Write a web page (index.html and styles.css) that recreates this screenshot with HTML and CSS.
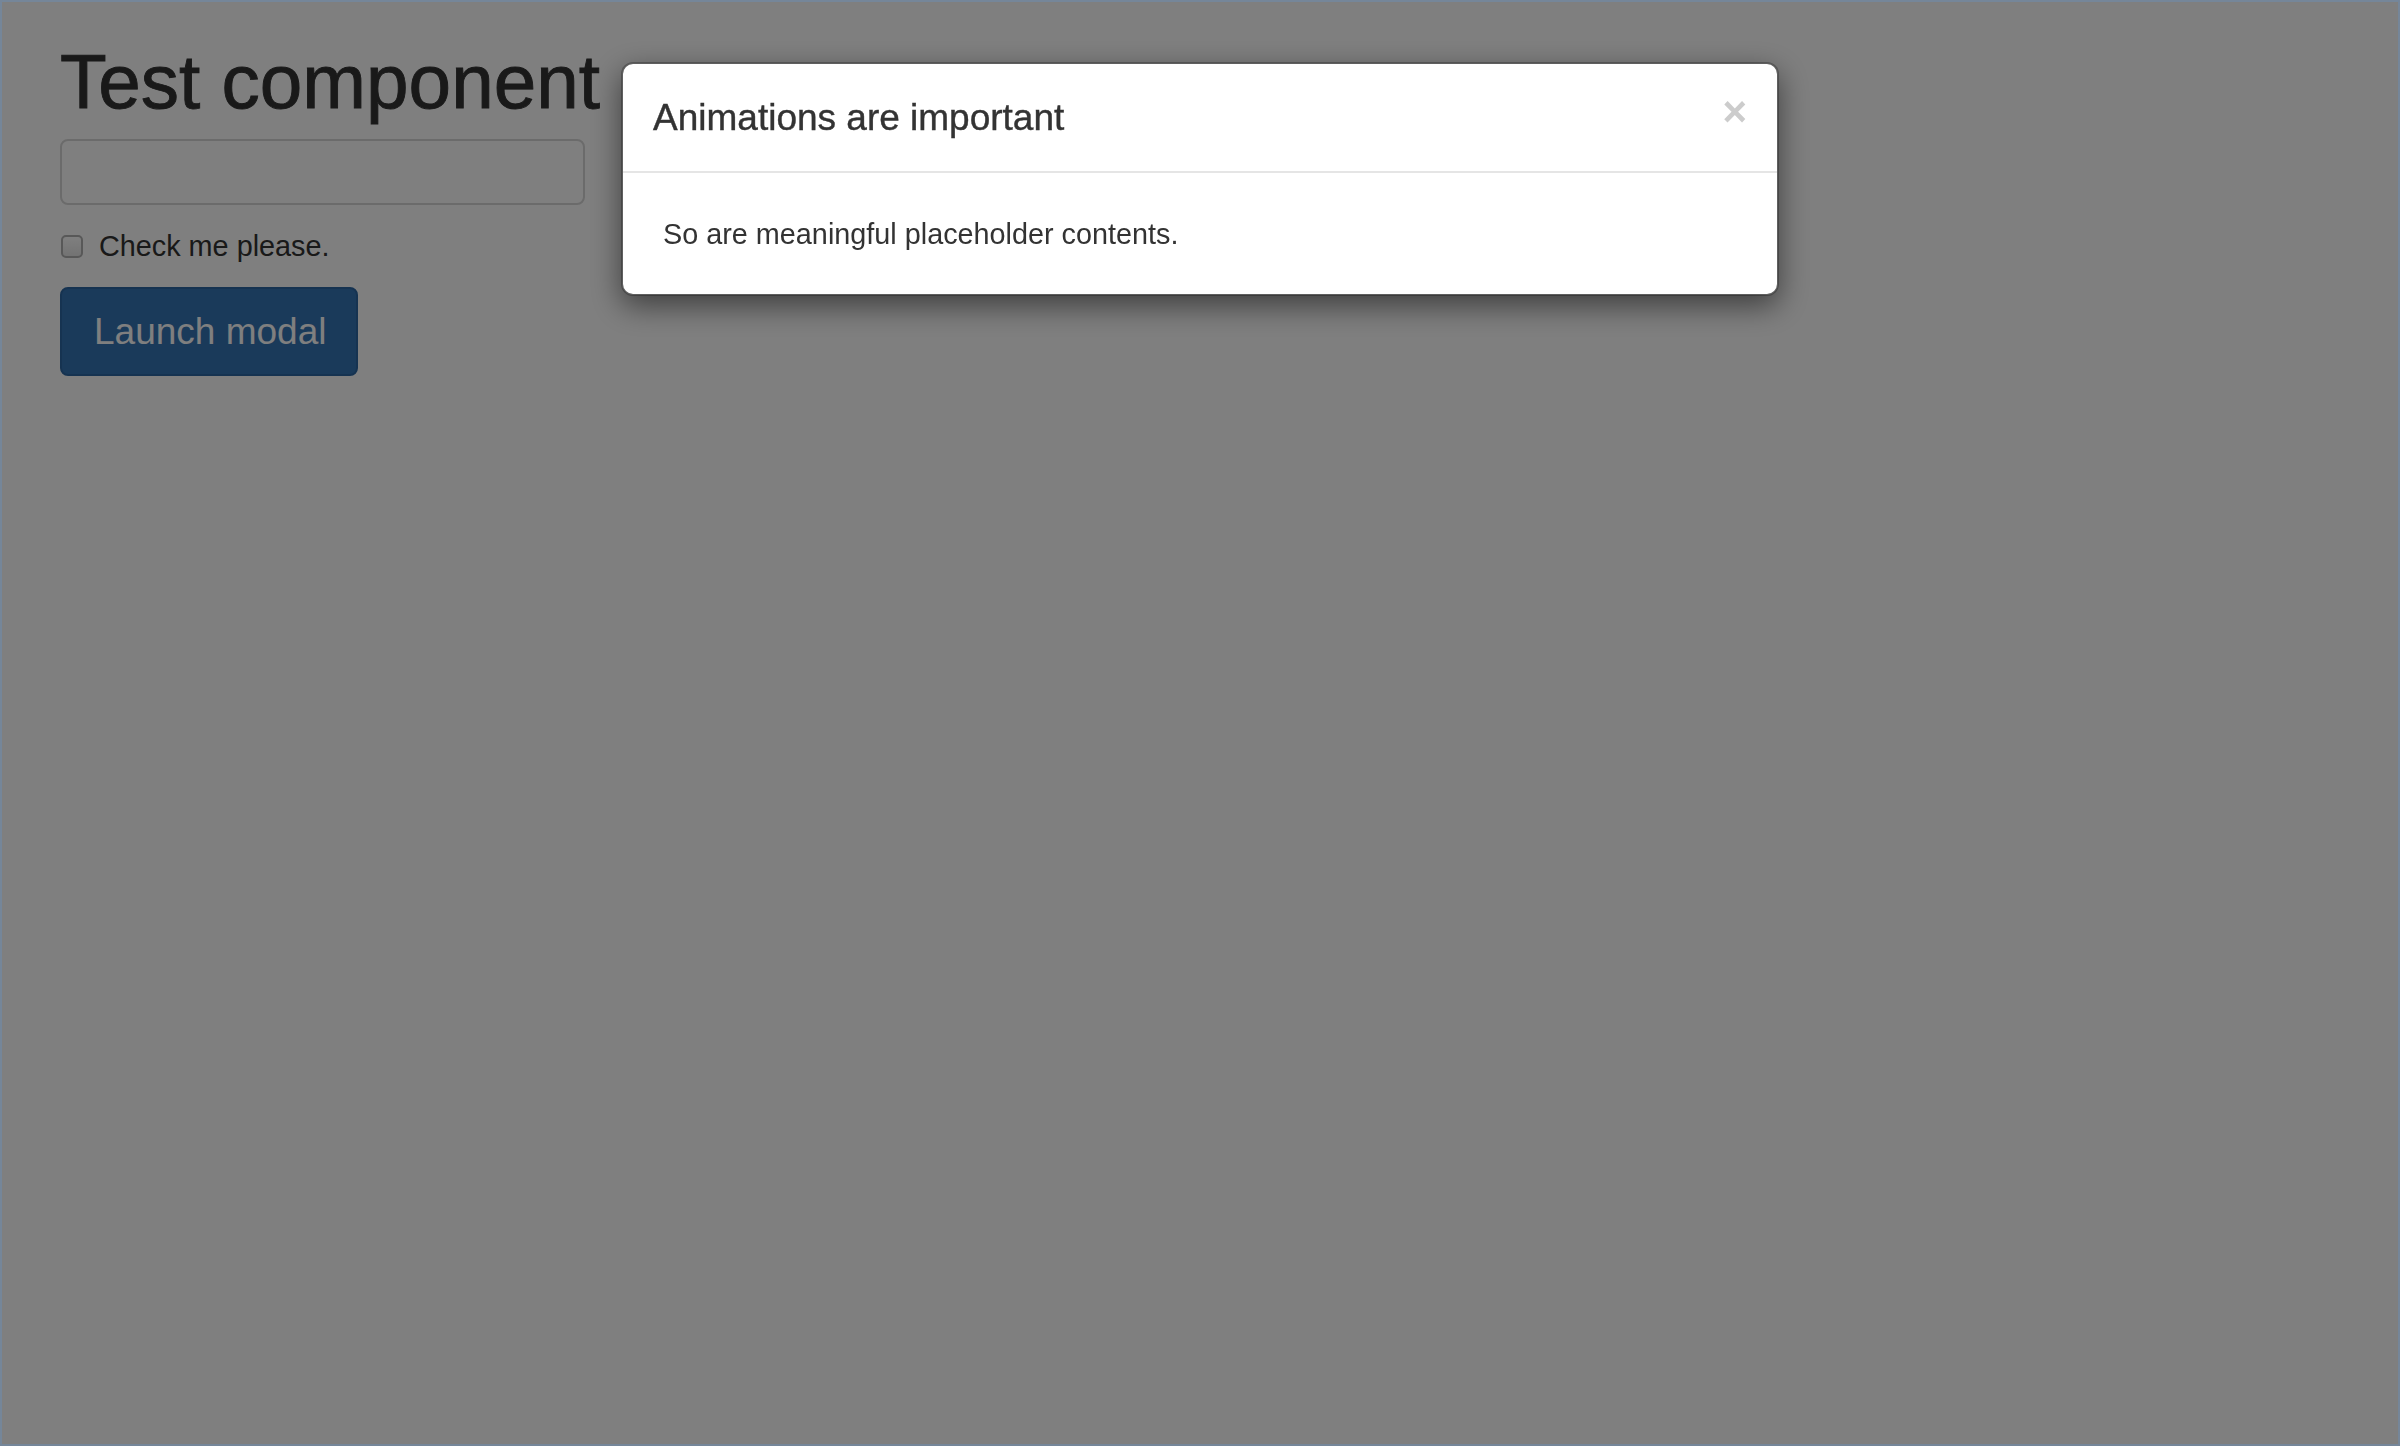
FILE: index.html
```
<!DOCTYPE html>
<html lang="en">
<head>
<meta charset="utf-8">
<title>Test component</title>
<link rel="stylesheet" href="styles.css">
</head>
<body>
<div class="page">
  <h1 class="title">Test component</h1>
  <input class="field" type="text">
  <label class="check"><span class="box"></span><span>Check me please.</span></label>
  <button class="btn" type="button">Launch modal</button>
</div>
<div class="backdrop"></div>
<div class="modal">
  <div class="modal-header">
    <h4 class="modal-title">Animations are important</h4>
    <span class="close">&times;</span>
  </div>
  <div class="modal-body">
    <p>So are meaningful placeholder contents.</p>
  </div>
</div>
</body>
</html>
```
FILE: styles.css
```
html, body {
  margin: 0;
  height: 100%;
}
body {
  font-family: "Liberation Sans", Arial, Helvetica, sans-serif;
  color: #333;
  background: #fff;
}
.page {
  padding: 41px 0 0 60px;
}
.title {
  margin: 0 0 16px;
  font-size: 76.5px;
  line-height: 82px;
  font-weight: normal;
  -webkit-text-stroke: 0.9px #333;
}
.field {
  display: block;
  box-sizing: border-box;
  width: 525px;
  height: 66px;
  margin: 0 0 21px;
  padding: 0;
  border: 2px solid #d6d6d6;
  border-radius: 8px;
  background: #fff;
}
.check {
  display: flex;
  align-items: center;
  gap: 16px;
  font-size: 28.8px;
  line-height: 40px;
  margin: 0 0 21px 1px;
}
.box {
  display: block;
  box-sizing: border-box;
  width: 22px;
  height: 23px;
  border: 2px solid #b0b0b0;
  border-radius: 5px;
  background: linear-gradient(#ffffff, #e6e6e6);
}
.btn {
  display: block;
  box-sizing: border-box;
  height: 89px;
  padding: 0 30px 0 32px;
  font-family: "Liberation Sans", Arial, Helvetica, sans-serif;
  font-size: 37px;
  line-height: 85px;
  color: #fff;
  background: #3574b4;
  border: 2px solid #2c67a3;
  border-radius: 8px;
}
.backdrop {
  position: fixed;
  inset: 0;
  background: rgba(0, 0, 0, 0.5);
  box-shadow: inset 0 0 0 2px rgba(110, 140, 175, 0.55);
}
.modal {
  position: fixed;
  left: 621px;
  top: 62px;
  width: 1158px;
  box-sizing: border-box;
  background: #fff;
  background-clip: padding-box;
  border: 2px solid rgba(0, 0, 0, 0.25);
  border-radius: 12px;
  box-shadow: 0 10px 30px rgba(0, 0, 0, 0.5);
}
.modal-header {
  display: flex;
  justify-content: space-between;
  align-items: flex-start;
  padding: 30px;
  border-bottom: 2px solid #e5e5e5;
}
.modal-title {
  margin: 0;
  font-size: 37px;
  line-height: 47px;
  font-weight: normal;
  -webkit-text-stroke: 0.4px #333;
}
.close {
  margin-top: -3px;
  font-size: 42px;
  line-height: 1;
  font-weight: bold;
  color: #ccc;
}
.modal-body {
  padding: 41px 40px 40px;
}
.modal-body p {
  margin: 0;
  font-size: 28.8px;
  line-height: 40px;
}
```
